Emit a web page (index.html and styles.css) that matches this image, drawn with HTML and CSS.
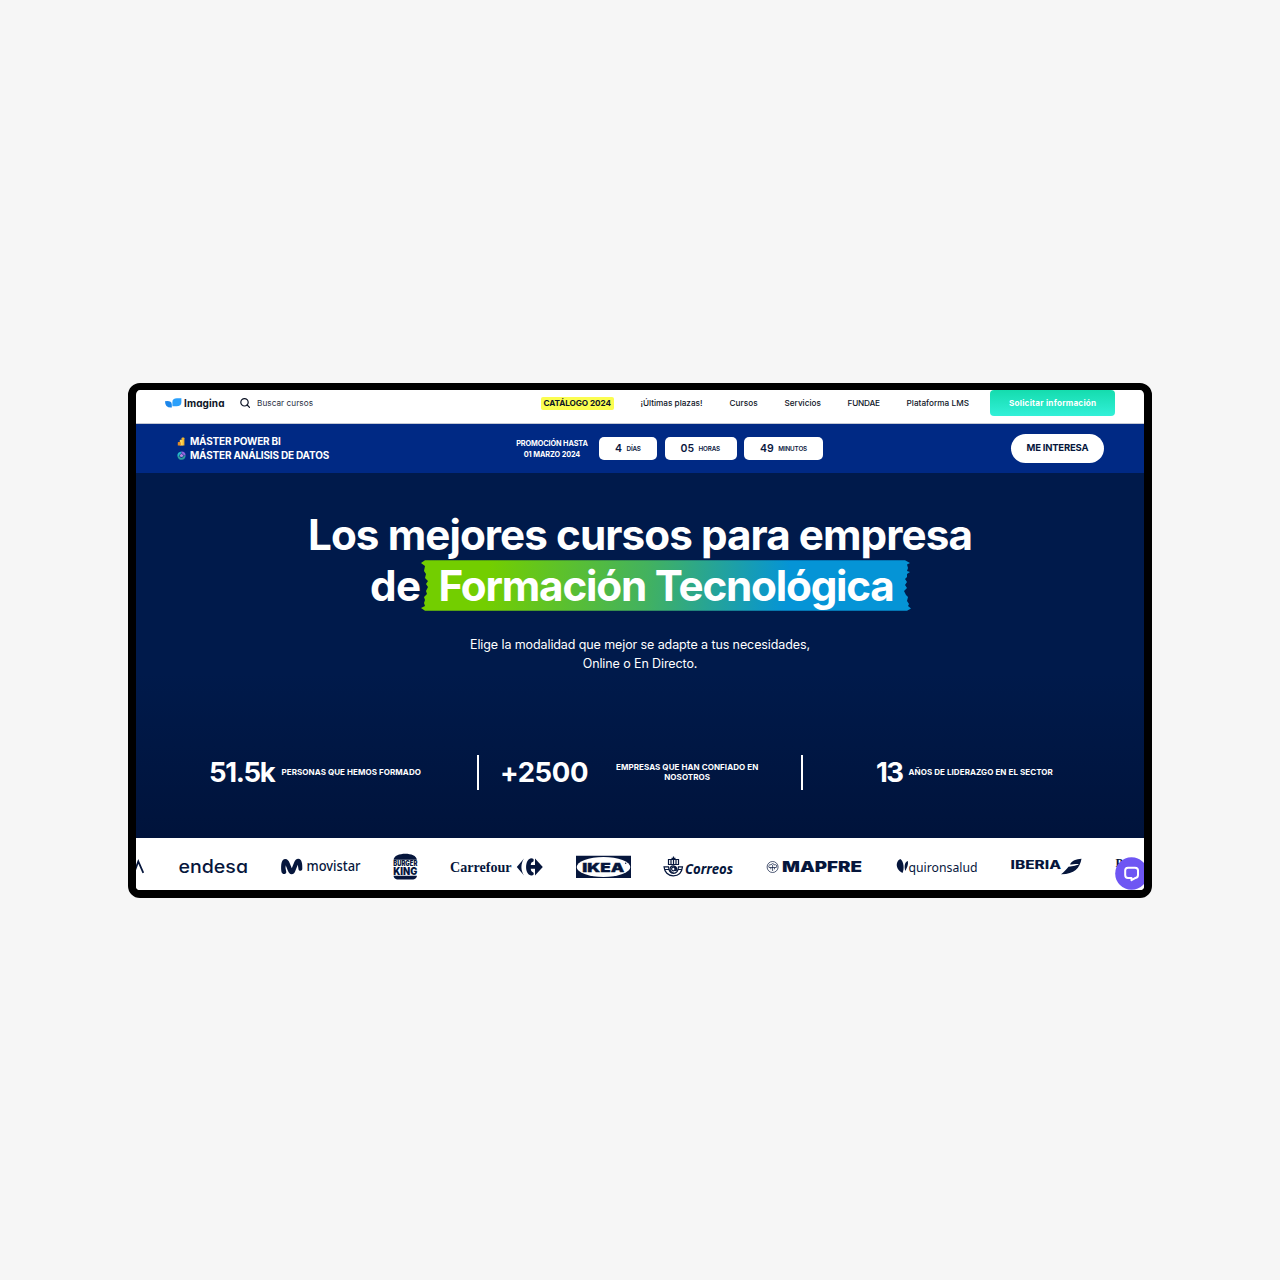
FILE: index.html
```html
<!DOCTYPE html>
<html lang="es">
<head>
<meta charset="utf-8">
<title>Imagina Formación</title>
<link rel="stylesheet" href="styles.css">
</head>
<body>
<main class="frame">
  <header class="nav">
    <a class="brand">
      <svg width="17" height="11" viewBox="0 0 17 11"><path d="M0 3.2Q3.500 2.600 5.500 3.700Q6.800 4.500 6.800 6.500V9.500Q0 10 0 3.200Z" fill="#1c86ea"/><path d="M7.400 8.300V4Q7.400.300 12 .300H16.400V4Q16.400 8.300 11.500 8.300Z" fill="#2ba0fb"/></svg>
      <span class="t brand-name">Imagina</span>
    </a>
    <div class="search">
      <svg width="11" height="11" viewBox="0 0 11 11" fill="none" stroke="#0d1426" stroke-width="1.200" stroke-linecap="round"><circle cx="4.500" cy="4.300" r="3.700"/><path d="M7.200 7L9.500 9.300"/></svg>
      <span class="t search-label">Buscar cursos</span>
    </div>
    <nav class="menu">
      <a class="catalog"><span class="t catalog-label">CATÁLOGO 2024</span></a>
      <a class="t plazas">¡Últimas plazas!</a>
      <a class="t cursos">Cursos</a>
      <a class="t servicios">Servicios</a>
      <a class="t fundae">FUNDAE</a>
      <a class="t lms">Plataforma LMS</a>
    </nav>
    <a class="cta"><span class="t cta-label">Solicitar información</span></a>
  </header>

  <section class="promo">
    <div class="masters">
      <div class="master">
        <svg width="9" height="9" viewBox="0 0 9 9"><path d="M4.600 1.200Q4.600.400 5.400.400H6.600Q7.400.400 7.400 1.200V8.600H4.600Z" fill="#f3b72e"/><path d="M2.800 3.400Q2.800 2.800 3.400 2.800H5Q5.600 2.800 5.600 3.400V8.600H2.800Z" fill="#ffd75a"/><path d="M.800 5.800Q.800 5 1.600 5H3Q3.800 5 3.800 5.800V8.600H.800Z" fill="#e08c28"/></svg>
        <span class="t m1">MÁSTER POWER BI</span>
      </div>
      <div class="master">
        <svg width="9" height="9" viewBox="0 0 9 9" fill="none" stroke-width="2"><path d="M1.400 5A3.200 3.200 0 0 1 4.500 1.400" stroke="#26b9c9"/><path d="M4.500 1.400A3.100 3.100 0 0 1 7.600 4.500" stroke="#8f62dc"/><path d="M7.600 4.500A3.100 3.100 0 0 1 1.400 5" stroke="#2d9b9d"/><circle cx="4.500" cy="4.500" r="1.600" fill="#b98ae0"/></svg>
        <span class="t m2">MÁSTER ANÁLISIS DE DATOS</span>
      </div>
    </div>
    <div class="until"><span class="t u1">PROMOCIÓN HASTA</span><span class="t u2">01 MARZO 2024</span></div>
    <div class="timer">
      <div class="cell days"><b class="t n1">4</b><span class="t l1">DÍAS</span></div>
      <div class="cell hours"><b class="t n2">05</b><span class="t l2">HORAS</span></div>
      <div class="cell minutes"><b class="t n3">49</b><span class="t l3">MINUTOS</span></div>
    </div>
    <a class="interest"><span class="t interest-label">ME INTERESA</span></a>
  </section>

  <section class="hero">
    <h1 class="title">
      <span class="t title-a">Los mejores cursos para empresa</span>
      <span class="title-row"><span class="t title-b">de</span><span class="brush">
        <svg class="brush-bg" width="490" height="51" viewBox="0 0 490 51" preserveAspectRatio="none"><defs><linearGradient id="g" x1="0" y1="0" x2="490" y2="0" gradientUnits="userSpaceOnUse" gradientTransform="rotate(6)"><stop offset=".14" stop-color="#73ce00"/><stop offset=".46" stop-color="#43b25e"/><stop offset=".75" stop-color="#0594d6"/></linearGradient></defs><path fill="url(#g)" d="M4 .300H484L489 3L486 4.500L487 8L486 11L489 12L486 14V17L484 19L486 22L484 25L486 28L483 31L485 35L487 37L486 41L488 44L487 46L490 48.500L486 50.700H4L0 48L4 46L3 43L4 40L3 37L6 34L5 31L7 27L5 24L7 21L4 18L5 14L3 11L4 6L0 3Z"/></svg>
        <span class="t title-c">Formación Tecnológica</span></span></span>
    </h1>
    <p class="lead"><span class="t lead-a">Elige la modalidad que mejor se adapte a tus necesidades,</span><span class="t lead-b">Online o En Directo.</span></p>
    <div class="stats">
      <div class="stat s1"><strong class="t k1">51.5k</strong><span class="t c1">PERSONAS QUE HEMOS FORMADO</span></div>
      <div class="stat s2"><strong class="t k2">+2500</strong><span class="two"><span class="t c2">EMPRESAS QUE HAN CONFIADO EN</span><span class="t c3">NOSOTROS</span></span></div>
      <div class="stat s3"><strong class="t k3">13</strong><span class="t c4">AÑOS DE LIDERAZGO EN EL SECTOR</span></div>
    </div>
  </section>

  <section class="logos">
    <svg width="1008" height="52" viewBox="136 838 1008 52" fill="#06163c">
      <path d="M134 873L138.300 861.500L143.300 872.800" fill="none" stroke="#06163c" stroke-width="1.800"/>
      <text class="endesa" x="178.500" y="872.800" textLength="69.500" lengthAdjust="spacingAndGlyphs">endesa</text>
      <path d="M281.300 871C280.800 865 281.300 859 285.300 859C287.500 859 288.700 860.800 289.500 862.800L291.800 868.300L294 862.800C295 860.200 296.300 858.800 298.300 858.800C302 858.800 302.500 864.500 302.300 869C302.200 871.200 298.900 871.500 298.500 869.300L297.800 864.800L295.300 871C294.500 873.200 293.300 874.200 291.700 874.200C289.800 874.200 288.800 873 288 871L285.700 865.300L285.500 868L286.300 872C286.500 874.500 281.700 875.300 281.300 871Z"/>
      <text class="movistar" x="306.500" y="870.800" textLength="54" lengthAdjust="spacingAndGlyphs">movistar</text>
      <path d="M393.600 859.800C394 851.700 416.500 851.700 416.900 859.800ZM393.600 875.700H416.900C416.900 878.500 414 879.600 411 879.600H399.500C396.500 879.600 393.600 878.500 393.600 875.700Z"/>
      <text class="bk" x="393.300" y="866.200" font-size="7" textLength="24" lengthAdjust="spacingAndGlyphs">BURGER</text>
      <text class="bk" x="393.300" y="874.500" font-size="9.800" textLength="24" lengthAdjust="spacingAndGlyphs">KING</text>
      <text class="carrefour" x="450" y="871.700" textLength="61.500" lengthAdjust="spacingAndGlyphs">Carrefour</text>
      <path d="M524 858.500L516.800 867L524 875.500C520.600 870 520.600 864 524 858.500ZM531 858.300C524.500 859.500 524.500 874.500 531 875.500C533.500 875.700 534 874.500 533.600 873C533 871.500 531 872.500 530.800 868.800H535V875.500L542.800 867L535 858.500V865H530.800C531 861.500 533 862.500 533.600 861C534 859.300 533.500 858.300 531 858.300Z"/>
      <path d="M576 855.800H631V878H576Z"/><ellipse cx="603.500" cy="867" rx="26.800" ry="10" fill="#fff"/>
      <text class="ikea" x="582.300" y="871.500" textLength="42" lengthAdjust="spacingAndGlyphs">IKEA</text>
      <circle cx="625.700" cy="863.300" r=".7"/>
      <g fill="none" stroke="#06163c" stroke-width="1.200"><path d="M668.500 859.500H678.500V864.500H668.500ZM671 859V864.500M673.500 856.500V864.500M676 859V864.500M671.500 858.300H675.500"/><path d="M664 866.800H668.500C669 875.500 678 875.500 678.500 866.800H682.500C682 872 679 875.800 673.300 875.800C668 875.800 664.500 872 664 866.800ZM664.800 869.500H669M678 869.500H682"/><circle cx="673.400" cy="869" r="1.800"/><path d="M675.200 867V870.300C677 871.500 678 867 673.400 865.900C669 866 669 872.500 673.500 872.500"/></g>
      <text class="correos" x="685" y="873.700" textLength="48" lengthAdjust="spacingAndGlyphs">Correos</text>
      <g fill="none" stroke="#06163c" stroke-width=".7"><circle cx="772.600" cy="867" r="5.500"/><path d="M769 867.500C768 865.500 770 864 771 865C771.500 863.200 774 863.200 774.300 865C776 864 777.500 865.500 776.300 867.500ZM772.600 865V871M770.800 867.500V869.300M774.500 867.500V869.300"/></g>
      <text class="mapfre" x="782" y="872.200" textLength="80" lengthAdjust="spacingAndGlyphs">MAPFRE</text>
      <path d="M900.300 859C903.800 861 904.600 869 902.500 873C898 870.500 896 866.500 897 863C897.600 861 898.600 859.800 900.300 859ZM907.900 861C908.500 865 907 867.500 905.300 871C904 866 904.700 862 907.900 861Z"/>
      <text class="quiron" x="908.500" y="871.500" textLength="69" lengthAdjust="spacingAndGlyphs">quironsalud</text>
      <text class="iberia" x="1010.500" y="868.500" textLength="50.500" lengthAdjust="spacingAndGlyphs">IBERIA</text>
      <path d="M1081.500 858.800C1080 868 1074 874.500 1061 874.300C1063.500 872.500 1066.500 869.500 1068.500 866.800C1073 866 1077.500 865.500 1078.800 864.300C1077 863.500 1073 864.500 1070 864.500C1072 860.500 1076 859.200 1081.500 858.800Z"/>
      <text class="pw" x="1115.500" y="867">PwC</text>
    </svg>
    <a class="chat"><svg width="33" height="33" viewBox="0 0 33 33"><circle cx="16.500" cy="16.500" r="16.300" fill="#6e56f3"/><path d="M13 10.700H20Q23 10.700 23 13.500V18Q23 20.500 20.500 20.900L16.500 23.200V20.900H13Q10.200 20.900 10.200 18V13.500Q10.200 10.700 13 10.700Z" fill="none" stroke="#fff" stroke-width="2" stroke-linejoin="round"/></svg></a>
  </section>
</main>
</body>
</html>
```
FILE: styles.css
```css
* { box-sizing: border-box; }
body { margin: 0; padding-top: 383px; height: 1280px; background: #f6f6f6; font-family: Inter, "Liberation Sans", sans-serif; color: #0d1426; overflow: hidden; }
.t { white-space: nowrap; display: block; }
svg { display: block; flex: none; }
.frame { width: 1024px; height: 515px; margin: 0 auto; border: 8px solid #000; border-top-width: 7px; border-radius: 12px; overflow: hidden; background: #fff; }

.nav { height: 34px; display: flex; align-items: flex-start; padding-left: 29px; border-bottom: 1px solid #c4c8d4; font-size: 8.2px; font-weight: 500; line-height: 26px; }
.brand { display: flex; align-items: center; gap: 2px; width: 75px; height: 26px; }
.brand-name { font-size: 10px; font-weight: 700; letter-spacing: .12px; font-feature-settings: "cv11"; }
.search { display: flex; align-items: center; gap: 6px; width: 301px; height: 26px; }
.search-label { font-weight: 400; color: #2a3144; letter-spacing: .05px; }
.menu { display: flex; align-items: center; gap: 26.5px; height: 26px; width: 449px; }
.catalog { width: 73px; height: 13px; line-height: 13px; padding-left: 2.5px; background: #fbfd50; border-radius: 2px; font-weight: 700; flex: none; letter-spacing: -.08px; }
.plazas { width: 62.5px; }
.cursos { width: 28.5px; letter-spacing: .05px; }
.servicios { width: 36.5px; }
.fundae { width: 32.5px; letter-spacing: -.18px; }
.lms { width: 63px; letter-spacing: .03px; }
.cta { width: 125px; height: 26px; border-radius: 4px; background: linear-gradient(#15dcae, #32f0d8); color: #fff; font-weight: 700; padding-left: 19px; letter-spacing: .2px; }

.promo { height: 49px; display: flex; align-items: center; background: #002984; color: #fff; padding-left: 41px; }
.masters { width: 339px; font-size: 10px; font-weight: 700; line-height: 14px; margin-top: -2px; letter-spacing: -.2px; }
.master { display: flex; align-items: center; gap: 4px; }
.master svg { margin-top: 1px; }
.until { width: 72px; font-size: 7.3px; font-weight: 700; line-height: 11px; letter-spacing: -.1px; display: flex; flex-direction: column; align-items: center; margin-right: 11px; }
.timer { display: flex; gap: 7.5px; width: 411.5px; }
.cell { height: 23px; border-radius: 5px; background: #fff; color: #0a1840; display: flex; align-items: center; gap: 4.5px; padding-left: 16px; font-size: 6.3px; font-weight: 600; letter-spacing: -.15px; }
.cell b { font-size: 10.5px; font-weight: 600; letter-spacing: 0; }
.days { width: 58px; }
.hours { width: 72px; }
.minutes { width: 79px; }
.interest { width: 93.5px; height: 29px; border-radius: 15px; background: #fff; color: #06163c; font-size: 9.5px; font-weight: 700; line-height: 28px; padding-left: 16px; letter-spacing: -.21px; }

.hero { height: 365px; background: linear-gradient(#001a4b 0, #001a4b 55%, #00133b 100%); color: #fff; padding-top: 36px; }
.title { margin: 0; font-size: 42.2px; font-weight: 700; line-height: 51px; }
.title-a { padding-left: 172px; letter-spacing: -.93px; }
.title-row { display: flex; padding-left: 234px; }
.title-b { width: 51px; letter-spacing: -.7px; }
.brush { position: relative; width: 490px; height: 51px; padding-left: 17.5px; }
.brush-bg { position: absolute; left: 0; top: 0; }
.title-c { position: relative; letter-spacing: -1.2px; }
.lead { margin: 24px 0 0; font-size: 12.5px; line-height: 19px; letter-spacing: -.1px; display: flex; flex-direction: column; align-items: center; }
.stats { margin-top: 82px; display: flex; height: 35px; font-size: 8px; font-weight: 700; letter-spacing: .07px; }
.stat { display: flex; align-items: center; line-height: 10px; }
.stat > span { margin-top: -1px; }
.stat strong { font-size: 27.5px; font-weight: 700; line-height: 35px; }
.s1 { width: 341px; padding-left: 73px; }
.s1 strong { width: 72.5px; letter-spacing: -1.3px; }
.s2 { width: 326px; border: solid #fff; border-width: 0 2px; padding-left: 21px; }
.s2 strong { width: 116px; letter-spacing: -.4px; }
.two { display: flex; flex-direction: column; align-items: center; }
.s3 { padding-left: 73px; }
.s3 strong { width: 32.5px; letter-spacing: -1.5px; }

.logos { height: 52px; position: relative; background: #fff; }
.endesa { font: 500 18px Inter, sans-serif; font-feature-settings: "cv11"; }
.movistar { font: 500 13.5px "Noto Sans", sans-serif; }
.bk { font-family: Inter, sans-serif; font-weight: 900; }
.carrefour { font: 700 15.5px "Liberation Serif", serif; }
.ikea { font: 900 12.3px Inter, sans-serif; stroke: #06163c; stroke-width: .3px; }
.correos { font: italic 700 13.5px "Noto Sans", sans-serif; }
.mapfre { font: 900 14.5px Inter, sans-serif; }
.quiron { font: 400 13px "Noto Sans", sans-serif; }
.iberia { font: 800 11.3px Inter, sans-serif; }
.pw { font: 700 12px "Liberation Serif", serif; }
.chat { position: absolute; left: 979px; top: 19px; }
```
